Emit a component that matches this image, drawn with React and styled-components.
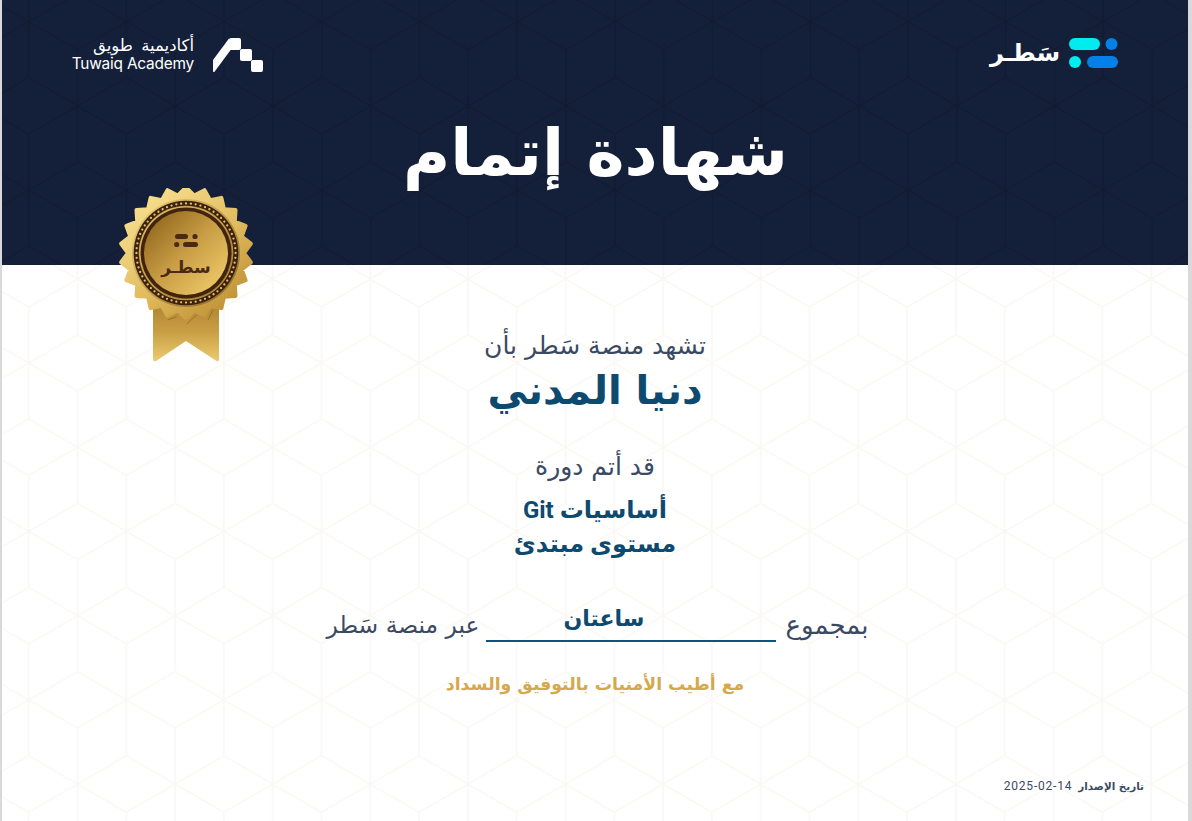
import styled, { createGlobalStyle } from "styled-components";

const GlobalStyle = createGlobalStyle`
  html, body {
    margin: 0;
    padding: 0;
    background: #d9d9d9;
  }
  #root {
    width: 100%;
    height: 821px;
    overflow: hidden;
  }
`;

const Sheet = styled.div`
  position: relative;
  width: 1186px;
  height: 821px;
  margin-left: 2px;
  background: #fff;
  font-family: "DejaVu Sans", sans-serif;
`;

const Header = styled.header`
  position: relative;
  height: 265px;
  box-sizing: border-box;
  padding: 37px 70px 0 71px;
  background: #14203a;
  overflow: hidden;
`;

const Body = styled.main`
  position: relative;
  height: 556px;
  box-sizing: border-box;
  padding-top: 66px;
  display: flex;
  flex-direction: column;
  align-items: center;
  overflow: hidden;
`;

const PatternLayer = styled.svg`
  position: absolute;
  inset: 0;
  width: 100%;
  height: 100%;
`;

const TopBar = styled.div`
  position: relative;
  display: flex;
  justify-content: space-between;
  align-items: flex-start;
`;

const TuwaiqLogo = styled.div`
  display: flex;
  align-items: center;
  gap: 19px;
  color: #fff;
`;

const TuwaiqText = styled.div`
  display: flex;
  flex-direction: column;
  width: 121px;
  align-items: flex-end;
`;

const TuwaiqArabic = styled.span`
  font-size: 16.5px;
  line-height: 18px;
  word-spacing: 3px;
  white-space: nowrap;
`;

const TuwaiqLatin = styled.span`
  font-family: Inter, sans-serif;
  font-size: 15.4px;
  line-height: 17px;
  letter-spacing: -0.2px;
  white-space: nowrap;
`;

const SaterLogo = styled.div`
  display: flex;
  align-items: center;
  gap: 9px;
  margin-top: 1px;
`;

const SaterWord = styled.span`
  color: #fff;
  font-size: 24px;
  font-weight: 700;
  line-height: 30px;
  white-space: nowrap;
`;

const Title = styled.h1`
  position: relative;
  margin: 43px 0 0;
  color: #fff;
  font-size: 64.5px;
  font-weight: 700;
  line-height: 76px;
  text-align: center;
`;

const Medal = styled.svg`
  position: absolute;
  left: 112px;
  top: 188px;
  width: 140px;
  height: 180px;
`;

const Lead = styled.p`
  position: relative;
  margin: ${(p) => p.$top}px 0 0;
  color: #3b4a63;
  font-size: 25px;
  line-height: 30px;
  text-align: center;
`;

const Name = styled.h2`
  position: relative;
  margin: 0;
  color: #0e4a70;
  font-size: 40px;
  font-weight: 700;
  line-height: 58px;
`;

const Course = styled.p`
  position: relative;
  margin: ${(p) => p.$top}px 0 0;
  color: #0e4a70;
  font-family: Roboto, "DejaVu Sans", sans-serif;
  font-size: 24px;
  font-weight: 700;
  line-height: 35px;
`;

const TotalRow = styled.div`
  position: relative;
  margin: 32px 0 0 5px;
  display: flex;
  align-items: flex-end;
  height: 48px;
`;

const TotalText = styled.span`
  padding-bottom: 2px;
  color: #3b4a63;
  font-size: ${(p) => p.$size}px;
  line-height: 30px;
  white-space: nowrap;
`;

const Duration = styled.span`
  width: 290px;
  height: 46px;
  margin: 0 9px 0 7px;
  box-sizing: border-box;
  padding: 8px 55px 0 0;
  border-bottom: 2px solid #0e5482;
  color: #0e4a70;
  font-size: 22px;
  font-weight: 700;
  line-height: 30px;
  text-align: center;
`;

const Wishes = styled.p`
  position: relative;
  margin: 30px 0 0;
  color: #d4a94e;
  font-size: 17.3px;
  font-weight: 700;
  line-height: 24px;
`;

const IssueDate = styled.div`
  position: absolute;
  right: 44px;
  bottom: 27px;
  display: flex;
  align-items: center;
  gap: 6px;
  color: #3b4a63;
  font-size: 10.4px;
  line-height: 16px;
`;

const IssueLabel = styled.span`
  font-weight: 700;
`;

const IssueValue = styled.span`
  font-family: Roboto, sans-serif;
  font-size: 12px;
  letter-spacing: 0.8px;
`;

const hexLines =
  "M48.8 0L0 28V140L48.8 168.4L97.6 140V28ZM48.8 0V56M0 84L48.8 56L97.6 84M0 84L48.8 112L97.6 84M48.8 112V168.4";

const HexPattern = ({ id, color, x, y, width }) => (
  <PatternLayer aria-hidden="true">
    <defs>
      <pattern id={id} x={x} y={y} width={width} height="168.4" patternUnits="userSpaceOnUse">
        <path
          d={hexLines}
          transform={`scale(${width / 97.6} 1)`}
          fill="none"
          stroke={color}
          strokeWidth="1.5"
        />
      </pattern>
    </defs>
    <rect width="100%" height="100%" fill={`url(#${id})`} />
  </PatternLayer>
);

const starPoints = () => {
  const teeth = 22;
  const pts = [];
  for (let i = 0; i < teeth * 2; i++) {
    const r = i % 2 === 0 ? 65.5 : 58;
    const a = (Math.PI * i) / teeth - Math.PI / 2;
    pts.push(`${(72 + r * Math.cos(a)).toFixed(1)},${(65 + r * Math.sin(a)).toFixed(1)}`);
  }
  return pts.join(" ");
};

const ringDots = () => {
  const dots = [];
  for (let i = 0; i < 64; i++) {
    const a = (2 * Math.PI * i) / 64;
    dots.push(
      <circle
        key={i}
        cx={(72 + 49.6 * Math.cos(a)).toFixed(2)}
        cy={(65 + 49.6 * Math.sin(a)).toFixed(2)}
        r="1.15"
        fill="#e3c16a"
      />
    );
  }
  return dots;
};

const MedalBadge = () => (
  <Medal viewBox="0 0 140 180">
    <defs>
      <linearGradient id="ribbonGold" x1="0" y1="0" x2="0" y2="1">
        <stop offset="0" stopColor="#a87c2c" />
        <stop offset="0.55" stopColor="#c99f45" />
        <stop offset="1" stopColor="#eccb6e" />
      </linearGradient>
      <linearGradient id="starGold" x1="0.1" y1="0" x2="0.9" y2="1">
        <stop offset="0" stopColor="#fbe596" />
        <stop offset="0.55" stopColor="#e1bb5e" />
        <stop offset="1" stopColor="#b8892f" />
      </linearGradient>
      <linearGradient id="faceGold" x1="0.1" y1="0.1" x2="0.9" y2="0.9">
        <stop offset="0" stopColor="#93691f" />
        <stop offset="0.5" stopColor="#c99e46" />
        <stop offset="1" stopColor="#edc866" />
      </linearGradient>
      <linearGradient id="rimGold" x1="0" y1="0" x2="1" y2="1">
        <stop offset="0" stopColor="#f0d47c" />
        <stop offset="1" stopColor="#8a6220" />
      </linearGradient>
    </defs>
    <path
      d="M39 108H105V171.5Q105 174 102.500 173L72 153L42 173Q39 174 39 171.500Z"
      fill="url(#ribbonGold)"
    />
    <polygon
      points={starPoints()}
      fill="url(#starGold)"
      stroke="url(#starGold)"
      strokeWidth="4"
      strokeLinejoin="round"
    />
    <path
      d="M53.700 132L62.700 128.700M72.700 136L82.700 127M94 132L99 122"
      fill="none"
      stroke="#8a6522"
      strokeWidth="0.7"
    />
    <circle cx="72" cy="65" r="54" fill="url(#rimGold)" />
    <circle cx="72" cy="65" r="52.300" fill="#3b210e" />
    <circle cx="72" cy="65" r="47.300" fill="#c69b43" />
    {ringDots()}
    <circle cx="72" cy="65" r="46.600" fill="url(#rimGold)" />
    <circle cx="72" cy="65" r="45.500" fill="#42230e" />
    <circle cx="72" cy="65" r="42" fill="url(#faceGold)" />
    <rect x="61" y="46" width="13" height="5" rx="2.500" fill="#4a2a14" />
    <circle cx="81" cy="48.500" r="2.600" fill="#4a2a14" />
    <circle cx="62.700" cy="56.500" r="2.600" fill="#4a2a14" />
    <rect x="69" y="54" width="15" height="5" rx="2.500" fill="#4a2a14" />
    <text
      x="72"
      y="85"
      textAnchor="middle"
      direction="rtl"
      fill="#4a2a14"
      fontFamily="DejaVu Sans, sans-serif"
      fontSize="17"
      fontWeight="700"
    >
      سطـر
    </text>
  </Medal>
);

const App = () => (
  <>
    <GlobalStyle />
    <Sheet dir="ltr">
      <Header>
        <HexPattern id="hexDark" color="#111b32" x="26.7" y="106" width="97.7" />
        <TopBar>
          <TuwaiqLogo>
            <TuwaiqText>
              <TuwaiqArabic dir="rtl">أكاديمية طويق</TuwaiqArabic>
              <TuwaiqLatin>Tuwaiq Academy</TuwaiqLatin>
            </TuwaiqText>
            <svg width="50" height="34" viewBox="0 0 50 34" fill="#fff" aria-hidden="true">
              <path d="M16 .5 0 22v11.500q.5.8 1.500.2L18 11.500Z" />
              <rect x="16" y="0" width="12" height="12" rx="2" />
              <rect x="27" y="11" width="12" height="12" rx="2" />
              <rect x="38" y="22" width="12" height="12" rx="2" />
            </svg>
          </TuwaiqLogo>
          <SaterLogo>
            <SaterWord dir="rtl">سَطـر</SaterWord>
            <svg width="49" height="30" viewBox="0 0 49 30" aria-hidden="true">
              <rect x="0" y="0" width="31" height="12" rx="6" fill="#00ecee" />
              <circle cx="42.500" cy="6" r="6" fill="#0480e8" />
              <circle cx="6" cy="24" r="6" fill="#00ecee" />
              <rect x="18" y="18" width="31" height="12" rx="6" fill="#0480e8" />
            </svg>
          </SaterLogo>
        </TopBar>
        <Title dir="rtl">شهادة إتمام</Title>
      </Header>
      <Body>
        <HexPattern id="hexLight" color="#faf8f3" x="26.7" y="14" width="97.6" />
        <Lead dir="rtl" $top={0}>تشهد منصة سَطر بأن</Lead>
        <Name dir="rtl">دنيا المدني</Name>
        <Lead dir="rtl" $top={33}>قد أتم دورة</Lead>
        <Course dir="rtl" $top={11}>أساسيات Git</Course>
        <Course dir="rtl" $top={-1}>مستوى مبتدئ</Course>
        <TotalRow dir="rtl">
          <TotalText $size={26}>بمجموع</TotalText>
          <Duration>ساعتان</Duration>
          <TotalText $size={23.4}>عبر منصة سَطر</TotalText>
        </TotalRow>
        <Wishes dir="rtl">مع أطيب الأمنيات بالتوفيق والسداد</Wishes>
        <IssueDate>
          <IssueValue>2025-02-14</IssueValue>
          <IssueLabel dir="rtl">تاريخ الإصدار</IssueLabel>
        </IssueDate>
      </Body>
      <MedalBadge />
    </Sheet>
  </>
);

export default App;
